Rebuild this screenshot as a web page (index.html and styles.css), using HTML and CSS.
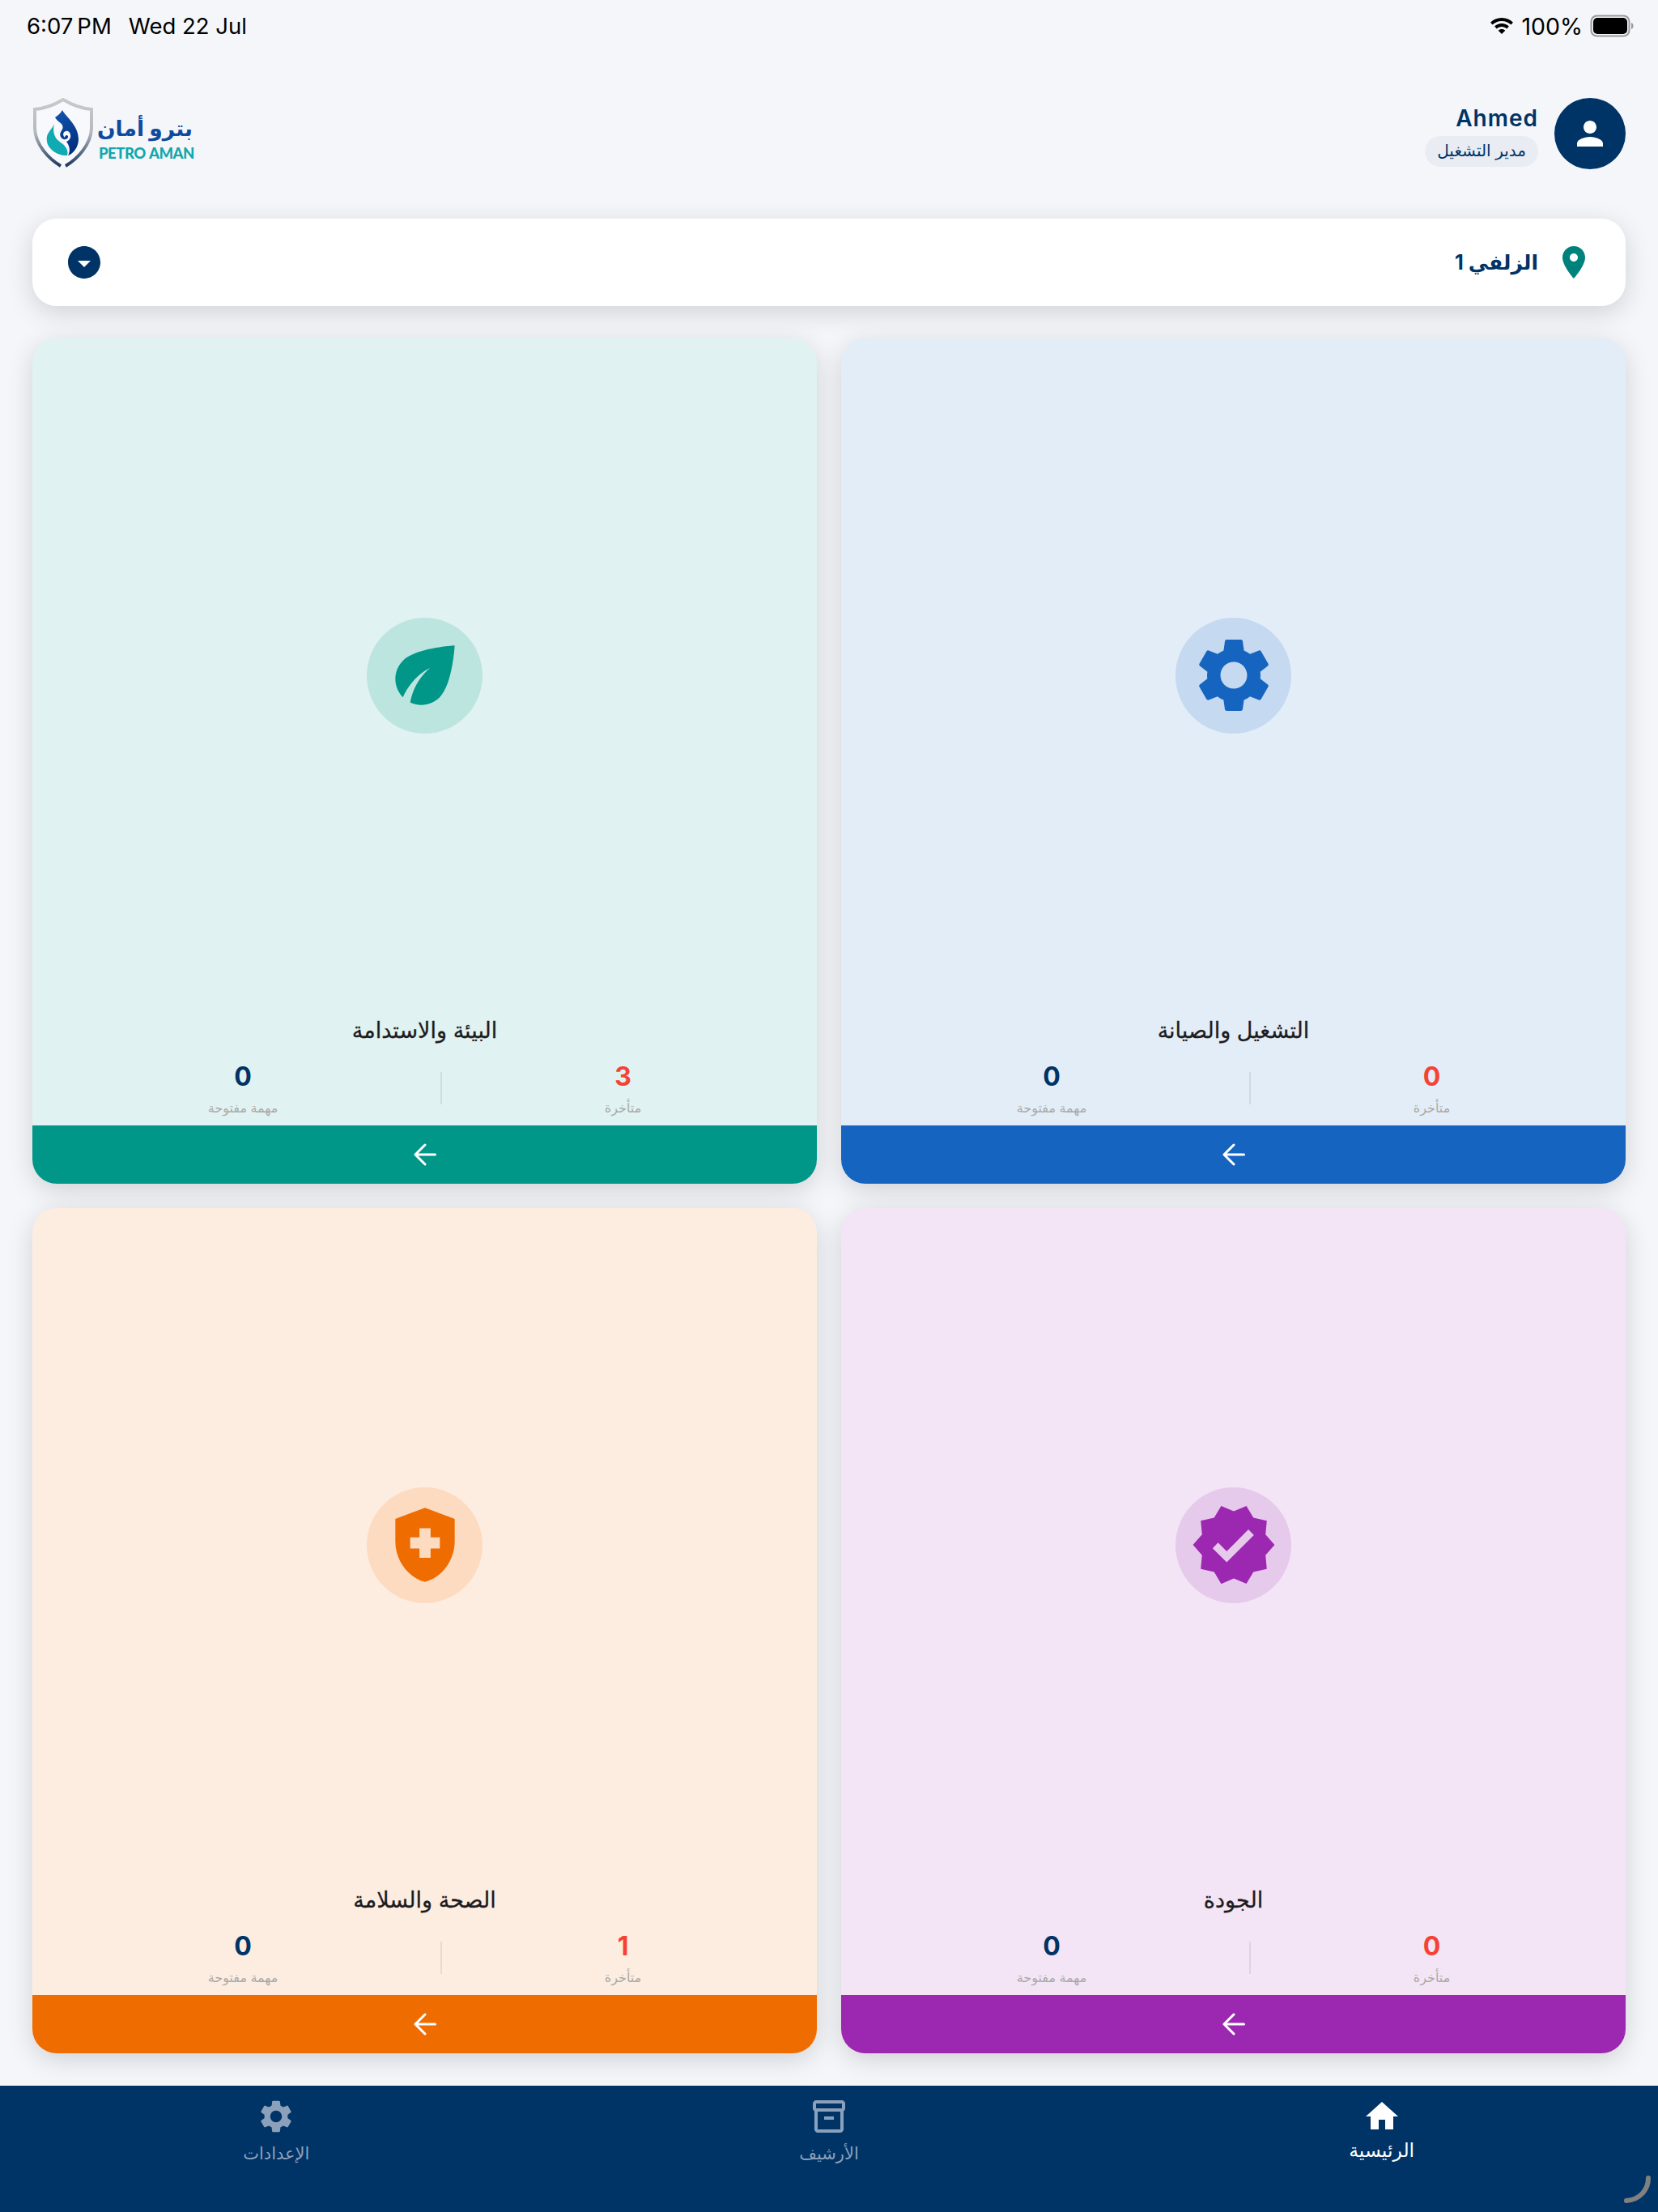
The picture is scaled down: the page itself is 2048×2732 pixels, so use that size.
FILE: index.html
```html
<!DOCTYPE html>
<html lang="ar" dir="rtl">
<head>
    <meta charset="UTF-8">
    <meta name="viewport" content="width=device-width, initial-scale=1.0">
    <title>Petro Aman</title>
    <link rel="stylesheet" href="styles.css">
</head>
<body>
    <div class="page">
        <div class="statusbar" dir="ltr">
            <div class="status-left">
                <span class="status-time">6:07<span class="status-ampm">PM</span></span>
                <span class="status-date">Wed 22 Jul</span>
            </div>
            <div class="status-right">
                <svg class="wifi" viewBox="0 0 30 22"><path d="M15 1C9.500 1 4.600 3.200 1 6.700l2.600 2.800C6.500 6.600 10.500 4.900 15 4.900s8.500 1.700 11.400 4.600L29 6.700C25.400 3.200 20.500 1 15 1z"/><path d="M15 8c-3.500 0-6.600 1.400-8.900 3.600l2.700 2.800c1.600-1.600 3.800-2.500 6.200-2.500s4.600.9 6.200 2.500l2.700-2.800C21.600 9.400 18.500 8 15 8z"/><path d="M15 15c-1.700 0-3.200.7-4.300 1.700L15 21l4.300-4.300C18.200 15.700 16.700 15 15 15z"/></svg>
                <span>100%</span>
                <svg class="battery" viewBox="0 0 54 28"><rect x="1.500" y="1.500" width="47" height="25" rx="7" fill="none" stroke="#999" stroke-width="2"/><rect x="4" y="4" width="42" height="20" rx="5" fill="#000"/><path d="M51 10c1.500.5 2.500 2 2.500 4s-1 3.500-2.500 4z" fill="#999"/></svg>
            </div>
        </div>

        <header class="topbar">
            <div class="user">
                <div class="avatar">
                    <svg viewBox="0 0 24 24"><path d="M12 12c2.210 0 4-1.790 4-4s-1.790-4-4-4-4 1.790-4 4 1.790 4 4 4zm0 2c-2.670 0-8 1.340-8 4v2h16v-2c0-2.660-5.330-4-8-4z"/></svg>
                </div>
                <div class="user-info">
                    <div class="user-name" dir="ltr">Ahmed</div>
                    <div class="user-role">مدير التشغيل</div>
                </div>
            </div>
            <div class="logo" dir="ltr">
                <svg class="logo-shield" viewBox="0 0 76 88">
                    <defs>
                        <linearGradient id="shieldStroke" x1="0" y1="0" x2="0" y2="1">
                            <stop offset="0" stop-color="#c8c9cb"/>
                            <stop offset="0.5" stop-color="#b5b8bf"/>
                            <stop offset="1" stop-color="#1e3a5f"/>
                        </linearGradient>
                        <linearGradient id="dropBlue" x1="0" y1="0" x2="0.3" y2="1">
                            <stop offset="0" stop-color="#1257ae"/>
                            <stop offset="1" stop-color="#032f80"/>
                        </linearGradient>
                    </defs>
                    <path d="M35 84C20 75 4 58 3 38L3 14C15 13 28 8 38 2C48 8 61 13 73 14L73 38C72 58 56 75 41 84" fill="#f8f9fc" stroke="url(#shieldStroke)" stroke-width="4"/>
                    <path d="M37 15C42 24 57 34 57 51C57 61 50 69 44 71C48 64 45 58 42 54C48 52 49 44 44 41C39 40 36 45 40 49C40 45 45 45 44 49C42 52 37 52 35 48C32 41 41 39 36 32C32 29 29 26 28 24C31 22 35 19 37 15z" fill="url(#dropBlue)"/>
                    <path d="M27 32C24 40 16 43 18 54C20 65 34 72 43 71C45 65 41 59 35 55C29 51 24 44 27 32z" fill="#0faab2"/>
                </svg>
                <div class="logo-text">
                    <div class="logo-ar" dir="rtl">بترو أمان</div>
                    <div class="logo-en">PETRO AMAN</div>
                </div>
            </div>
        </header>

        <div class="site-select">
            <svg class="site-pin" viewBox="0 0 24 24"><path d="M12 2C8.130 2 5 5.130 5 9c0 5.250 7 13 7 13s7-7.750 7-13c0-3.870-3.130-7-7-7zm0 9.500c-1.380 0-2.500-1.120-2.500-2.500s1.120-2.500 2.500-2.500 2.500 1.120 2.500 2.500-1.120 2.500-2.500 2.500z"/></svg>
            <div class="site-name">الزلفي 1</div>
            <svg class="site-caret" viewBox="0 0 24 24"><path d="M12 2C6.480 2 2 6.480 2 12s4.480 10 10 10 10-4.480 10-10S17.520 2 12 2zm0 13-4-4h8l-4 4z"/></svg>
        </div>

        <main class="cards">
            <section class="card card-blue">
                <div class="card-icon-wrap">
                    <div class="card-icon">
                        <svg viewBox="0 0 24 24"><path d="M19.140,12.940c0.040-0.300,0.060-0.610,0.060-0.940c0-0.320-0.020-0.640-0.070-0.940l2.030-1.580c0.180-0.140,0.230-0.410,0.120-0.610l-1.920-3.320c-0.120-0.220-0.370-0.290-0.590-0.220l-2.390,0.960c-0.500-0.380-1.030-0.700-1.620-0.940L14.400,2.810c-0.040-0.240-0.240-0.410-0.480-0.410h-3.840c-0.240,0-0.430,0.170-0.470,0.410L9.250,5.350C8.660,5.590,8.120,5.920,7.630,6.290L5.240,5.330c-0.220-0.080-0.470,0-0.590,0.220L2.740,8.870C2.620,9.080,2.660,9.340,2.860,9.480l2.030,1.580C4.840,11.360,4.800,11.690,4.800,12s0.020,0.640,0.070,0.940l-2.030,1.580c-0.180,0.140-0.230,0.410-0.120,0.610l1.920,3.320c0.120,0.220,0.370,0.290,0.590,0.220l2.390-0.960c0.500,0.380,1.030,0.700,1.620,0.940l0.360,2.540c0.050,0.240,0.240,0.410,0.480,0.410h3.840c0.240,0,0.440-0.170,0.470-0.410l0.360-2.540c0.590-0.240,1.130-0.560,1.620-0.940l2.390,0.960c0.220,0.080,0.470,0,0.590-0.220l1.920-3.320c0.120-0.220,0.070-0.470-0.120-0.610L19.140,12.940z M12,15.600c-1.980,0-3.600-1.620-3.600-3.600s1.620-3.600,3.600-3.600s3.600,1.620,3.600,3.600S13.980,15.600,12,15.600z"/></svg>
                    </div>
                </div>
                <div class="card-title">التشغيل والصيانة</div>
                <div class="stats">
                    <div class="stat">
                        <div class="stat-num late">0</div>
                        <div class="stat-label">متأخرة</div>
                    </div>
                    <div class="stat-divider"></div>
                    <div class="stat">
                        <div class="stat-num">0</div>
                        <div class="stat-label">مهمة مفتوحة</div>
                    </div>
                </div>
                <div class="card-footer">
                    <svg viewBox="0 0 28 28"><path d="M26.500 14H2M14 2L2 14L14 26"/></svg>
                </div>
            </section>

            <section class="card card-green">
                <div class="card-icon-wrap">
                    <div class="card-icon">
                        <svg viewBox="0 0 24 24"><path d="M6.050 8.050c-2.730 2.730-2.730 7.150-.02 9.880 1.470-3.400 4.090-6.240 7.360-7.930-2.770 2.340-4.710 5.610-5.390 9.320 2.600 1.230 5.800.78 7.950-1.370C19.430 14.470 20 4 20 4S9.530 4.570 6.050 8.050z"/></svg>
                    </div>
                </div>
                <div class="card-title">البيئة والاستدامة</div>
                <div class="stats">
                    <div class="stat">
                        <div class="stat-num late">3</div>
                        <div class="stat-label">متأخرة</div>
                    </div>
                    <div class="stat-divider"></div>
                    <div class="stat">
                        <div class="stat-num">0</div>
                        <div class="stat-label">مهمة مفتوحة</div>
                    </div>
                </div>
                <div class="card-footer">
                    <svg viewBox="0 0 28 28"><path d="M26.500 14H2M14 2L2 14L14 26"/></svg>
                </div>
            </section>

            <section class="card card-purple">
                <div class="card-icon-wrap">
                    <div class="card-icon">
                        <svg viewBox="0 0 24 24"><path d="m23 11.990-2.440-2.790.34-3.690-3.610-.82L15.400 1.500 12 2.960 8.600 1.500 6.710 4.690 3.100 5.500l.34 3.700L1 11.990l2.440 2.790-.34 3.700 3.610.82L8.600 22.500l3.400-1.470 3.400 1.460 1.890-3.190 3.610-.82-.34-3.690L23 11.990zm-12.910 4.720-3.800-3.810 1.480-1.480 2.320 2.330 5.850-5.870 1.480 1.480-7.330 7.350z"/></svg>
                    </div>
                </div>
                <div class="card-title">الجودة</div>
                <div class="stats">
                    <div class="stat">
                        <div class="stat-num late">0</div>
                        <div class="stat-label">متأخرة</div>
                    </div>
                    <div class="stat-divider"></div>
                    <div class="stat">
                        <div class="stat-num">0</div>
                        <div class="stat-label">مهمة مفتوحة</div>
                    </div>
                </div>
                <div class="card-footer">
                    <svg viewBox="0 0 28 28"><path d="M26.500 14H2M14 2L2 14L14 26"/></svg>
                </div>
            </section>

            <section class="card card-orange">
                <div class="card-icon-wrap">
                    <div class="card-icon">
                        <svg viewBox="0 0 24 24"><path d="M10.500 13H8v-3h2.500V7.500h3V10H16v3h-2.500v2.500h-3V13zM12 2 4 5v6.090c0 5.050 3.410 9.760 8 10.910 4.590-1.150 8-5.860 8-10.910V5l-8-3z"/></svg>
                    </div>
                </div>
                <div class="card-title">الصحة والسلامة</div>
                <div class="stats">
                    <div class="stat">
                        <div class="stat-num late">1</div>
                        <div class="stat-label">متأخرة</div>
                    </div>
                    <div class="stat-divider"></div>
                    <div class="stat">
                        <div class="stat-num">0</div>
                        <div class="stat-label">مهمة مفتوحة</div>
                    </div>
                </div>
                <div class="card-footer">
                    <svg viewBox="0 0 28 28"><path d="M26.500 14H2M14 2L2 14L14 26"/></svg>
                </div>
            </section>
        </main>

        <nav class="bottom-nav">
            <div class="nav-item active">
                <svg viewBox="0 0 24 24"><path d="M10 20v-6h4v6h5v-8h3L12 3 2 12h3v8z"/></svg>
                <span class="nav-label">الرئيسية</span>
            </div>
            <div class="nav-item">
                <svg viewBox="0 0 24 24"><path d="M20 2H4c-1 0-2 .9-2 2v3.010c0 .72.43 1.340 1 1.690V20c0 1.100 1.100 2 2 2h14c.9 0 2-.9 2-2V8.700c.57-.35 1-.97 1-1.690V4c0-1.100-1-2-2-2zm-1 18H5V9h14v11zm1-13H4V4h16v3z"/><path d="M9 12h6v2H9z"/></svg>
                <span class="nav-label">الأرشيف</span>
            </div>
            <div class="nav-item">
                <svg viewBox="0 0 24 24"><path d="M19.140,12.940c0.040-0.300,0.060-0.610,0.060-0.940c0-0.320-0.020-0.640-0.070-0.940l2.030-1.580c0.180-0.140,0.230-0.410,0.120-0.610l-1.920-3.320c-0.120-0.220-0.370-0.290-0.590-0.220l-2.390,0.960c-0.500-0.380-1.030-0.700-1.620-0.940L14.400,2.810c-0.040-0.240-0.240-0.410-0.480-0.410h-3.840c-0.240,0-0.430,0.170-0.470,0.410L9.250,5.350C8.660,5.590,8.120,5.920,7.630,6.290L5.240,5.330c-0.220-0.080-0.470,0-0.590,0.220L2.740,8.870C2.620,9.080,2.660,9.340,2.860,9.480l2.030,1.580C4.840,11.360,4.800,11.690,4.800,12s0.020,0.640,0.070,0.940l-2.030,1.580c-0.180,0.140-0.230,0.410-0.120,0.610l1.920,3.320c0.120,0.220,0.370,0.290,0.590,0.220l2.390-0.960c0.500,0.380,1.030,0.700,1.620,0.940l0.360,2.540c0.050,0.240,0.240,0.410,0.480,0.410h3.840c0.240,0,0.440-0.170,0.470-0.410l0.360-2.540c0.590-0.240,1.130-0.560,1.620-0.940l2.390,0.960c0.220,0.080,0.470,0,0.590-0.220l1.920-3.320c0.120-0.220,0.070-0.470-0.120-0.610L19.140,12.940z M12,15.600c-1.980,0-3.600-1.620-3.600-3.600s1.620-3.600,3.600-3.600s3.600,1.620,3.600,3.600S13.980,15.600,12,15.600z"/></svg>
                <span class="nav-label">الإعدادات</span>
            </div>
            <svg class="home-indicator" viewBox="0 0 34 36"><path d="M31 3C31 18 20 30 4 31"/></svg>
        </nav>
    </div>
</body>
</html>
```

FILE: styles.css
```css
* {
    box-sizing: border-box;
}
body {
    margin: 0;
    background: #f5f6fa;
    font-family: Inter, "DejaVu Sans", sans-serif;
}
.page {
    width: 2048px;
    height: 2732px;
    display: flex;
    flex-direction: column;
}

/* status bar */
.statusbar {
    height: 64px;
    padding: 0 30px 0 33px;
    display: flex;
    justify-content: space-between;
    align-items: center;
    font-size: 28.5px;
    color: #000;
}
.status-left {
    display: flex;
    gap: 21px;
    font-size: 27.5px;
}
.status-ampm {
    margin-left: 5px;
}
.status-right {
    display: flex;
    align-items: center;
    gap: 9px;
}
.wifi {
    width: 30px;
    height: 22px;
}
.battery {
    width: 54px;
    height: 28px;
}

/* header */
.topbar {
    height: 206px;
    padding: 57px 40px 0;
    display: flex;
    justify-content: space-between;
    align-items: flex-start;
}
.user {
    display: flex;
    align-items: center;
    gap: 20px;
}
.avatar {
    width: 88px;
    height: 88px;
    border-radius: 50%;
    background: #003366;
    display: flex;
    align-items: center;
    justify-content: center;
}
.avatar svg {
    width: 48px;
    height: 48px;
    fill: #fff;
}
.user-info {
    display: flex;
    flex-direction: column;
    align-items: flex-start;
    gap: 4px;
    padding-top: 4px;
}
.user-name {
    font-size: 28px;
    line-height: 36px;
    font-weight: 600;
    letter-spacing: 1px;
    color: #003366;
}
.user-role {
    height: 38px;
    padding: 0 15px;
    border-radius: 19px;
    background: #e9ecf3;
    color: #003366;
    font-size: 20px;
    line-height: 36px;
    white-space: nowrap;
}
.logo {
    display: flex;
    align-items: flex-start;
    gap: 6px;
}
.logo-shield {
    width: 76px;
    height: 88px;
}
.logo-text {
    padding-top: 16px;
    width: 116px;
}
.logo-ar {
    font-size: 26.5px;
    line-height: 42px;
    font-weight: 700;
    color: #0f4a9e;
    white-space: nowrap;
}
.logo-en {
    font-family: Lato, sans-serif;
    font-size: 18.5px;
    line-height: 20px;
    font-weight: 900;
    letter-spacing: -0.5px;
    word-spacing: 1px;
    color: #12a7ad;
    white-space: nowrap;
}

/* site selector */
.site-select {
    height: 108px;
    margin: 0 40px;
    padding: 0 40px;
    display: flex;
    align-items: center;
    gap: 20px;
    background: #fff;
    border-radius: 30px;
    box-shadow: 0 8px 32px rgba(0, 0, 0, 0.15);
}
.site-pin {
    width: 48px;
    height: 48px;
    fill: #00827c;
}
.site-name {
    flex: 1;
    font-size: 25px;
    font-weight: 700;
    color: #003366;
}
.site-caret {
    width: 48px;
    height: 48px;
    fill: #003366;
}

/* cards */
.cards {
    flex: 1;
    min-height: 0;
    margin: 40px 40px;
    display: grid;
    grid-template-columns: 1fr 1fr;
    grid-template-rows: 1fr 1fr;
    gap: 30px;
}
.card {
    display: flex;
    flex-direction: column;
    border-radius: 30px;
    overflow: hidden;
    box-shadow: 0 8px 32px rgba(0, 0, 0, 0.15);
}
.card-icon-wrap {
    flex: 1;
    display: flex;
    align-items: center;
    justify-content: center;
}
.card-icon {
    width: 143px;
    height: 143px;
    border-radius: 50%;
    display: flex;
    align-items: center;
    justify-content: center;
}
.card-icon svg {
    width: 110px;
    height: 110px;
}
.card-title {
    height: 46px;
    margin-bottom: 14px;
    font-size: 27px;
    line-height: 46px;
    -webkit-text-stroke: 0.3px #1c1c1e;
    text-align: center;
    color: #1c1c1e;
}
.stats {
    height: 80px;
    padding: 0 16px;
    display: flex;
    justify-content: space-evenly;
    align-items: flex-start;
}
.stat {
    display: flex;
    flex-direction: column;
    align-items: center;
}
.stat-num {
    font-size: 32px;
    line-height: 40px;
    font-weight: 700;
    color: #003366;
}
.stat-num.late {
    color: #f44336;
}
.stat-label {
    font-size: 16px;
    line-height: 36px;
    color: #aaa;
}
.stat-divider {
    width: 2px;
    height: 40px;
    margin-top: 14px;
    background: rgba(0, 0, 0, 0.08);
}
.card-footer {
    height: 72px;
    display: flex;
    align-items: center;
    justify-content: center;
}
.card-footer svg {
    width: 28px;
    height: 28px;
    fill: none;
    stroke: #fff;
    stroke-width: 3;
    stroke-linecap: round;
    stroke-linejoin: round;
}
.card-blue { background: #e3edf7; }
.card-blue .card-icon { background: #c5d9f0; }
.card-blue .card-icon svg { fill: #1565c0; }
.card-blue .card-footer { background: #1565c0; }
.card-green { background: #e0f2f1; }
.card-green .card-icon { background: #bde5e0; }
.card-green .card-icon svg { fill: #009688; }
.card-green .card-footer { background: #009688; }
.card-purple { background: #f3e5f5; }
.card-purple .card-icon { background: #e6caec; }
.card-purple .card-icon svg { fill: #9c27b0; }
.card-purple .card-footer { background: #9c27b0; }
.card-orange { background: #fdede0; }
.card-orange .card-icon { background: #fcdbc0; }
.card-orange .card-icon svg { fill: #ef6c00; }
.card-orange .card-footer { background: #ef6c00; }

/* bottom nav */
.bottom-nav {
    position: relative;
    height: 156px;
    background: #003366;
    display: grid;
    grid-template-columns: repeat(3, 1fr);
    align-items: start;
    justify-items: center;
}
.nav-item {
    padding-top: 14px;
    display: flex;
    flex-direction: column;
    align-items: center;
    color: #8ba1bb;
}
.nav-item svg {
    width: 48px;
    height: 48px;
    fill: #8ba1bb;
}
.nav-label {
    font-size: 21px;
    line-height: 30px;
    margin-top: 7px;
}
.nav-item.active {
    color: #fff;
}
.nav-item.active svg {
    fill: #fff;
}
.nav-item.active .nav-label {
    font-size: 23.5px;
    margin-top: 3px;
}
.home-indicator {
    position: absolute;
    right: 9px;
    bottom: 9px;
    width: 34px;
    height: 36px;
    fill: none;
    stroke: #808080;
    stroke-width: 6;
    stroke-linecap: round;
}
```
